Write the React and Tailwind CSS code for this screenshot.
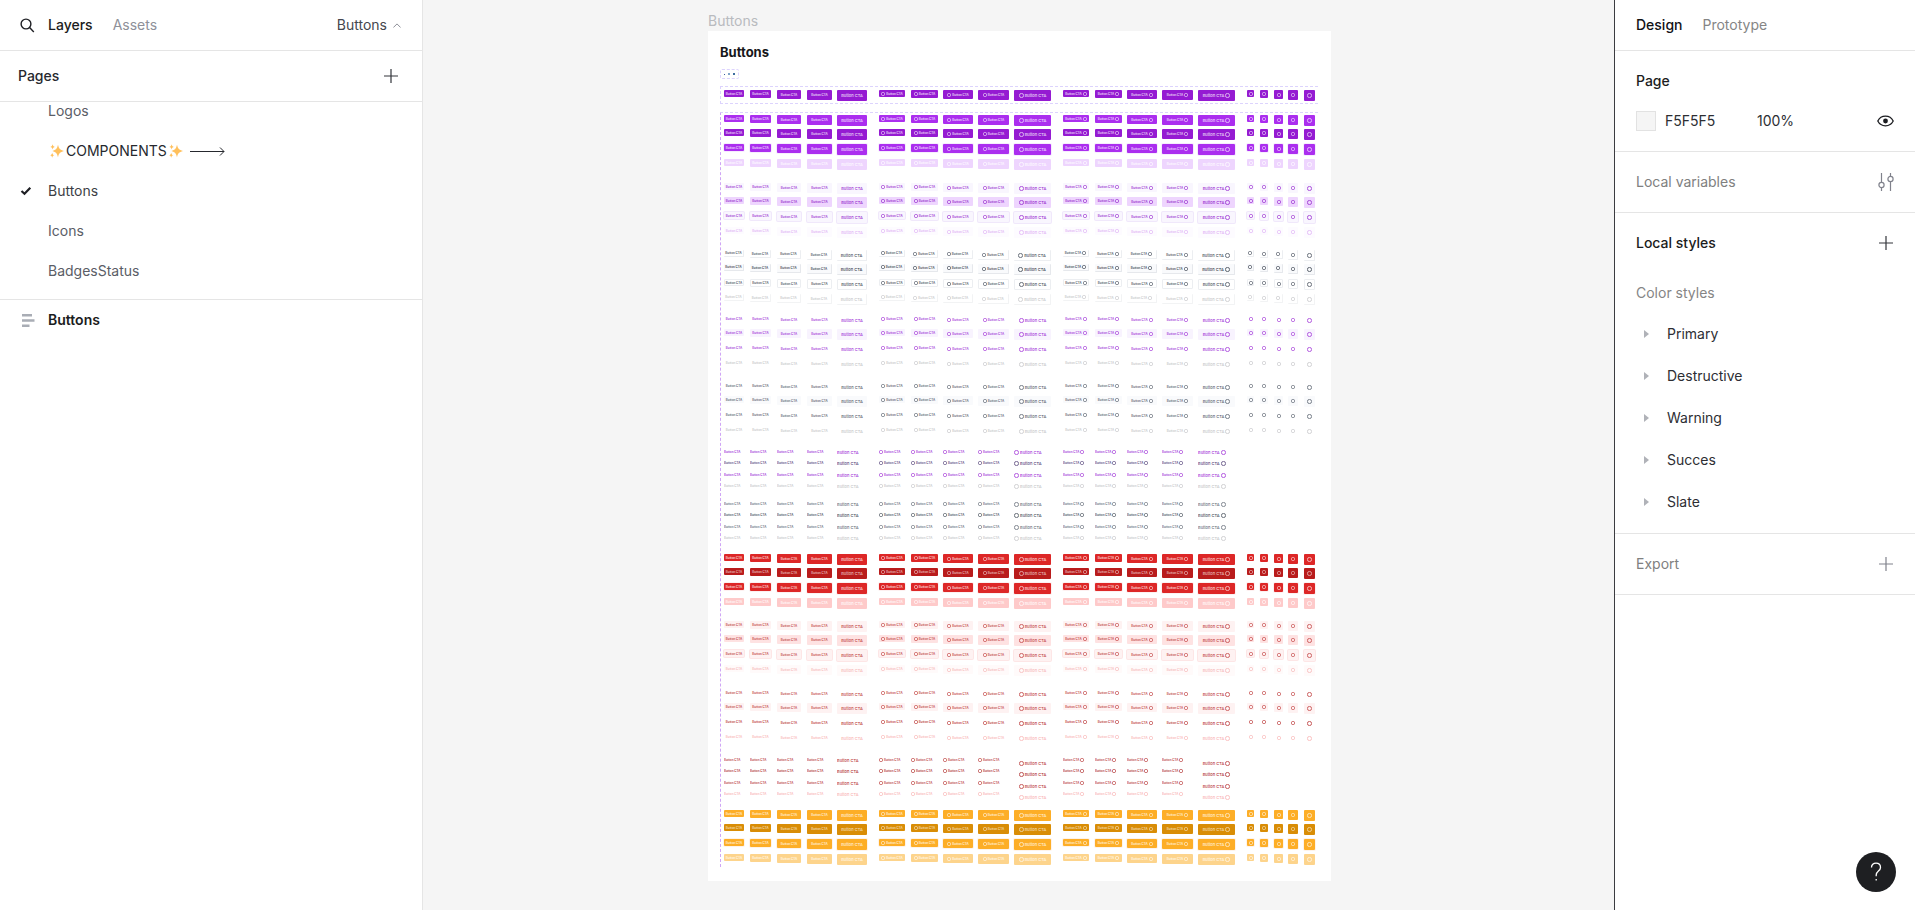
import React from "react";

const GRID =
  "grid grid-cols-[26px_27px_30px_30px_42px_32px_32px_35px_36px_49px_32px_32px_35px_36px_49px_13px_14px_14px_16px_11px] items-start";

const HEIGHTS = ["h-[7px]", "h-[8px]", "h-[9px]", "h-[10px]", "h-[11px]"];
const LABEL_WIDTHS = ["w-[20px]", "w-[21px]", "w-[24px]", "w-[25px]", "w-[30px]"];
const ICON_LABEL_WIDTHS = ["w-[26px]", "w-[27px]", "w-[30px]", "w-[31px]", "w-[37px]"];
const SQUARES = ["w-[7px]", "w-[8px]", "w-[9px]", "w-[10px]", "w-[11px]"];

const SECTIONS = [
  {
    name: "Primary",
    space: "pt-[2px]",
    rows: [
      "bg-[#ab2eef] text-white/80",
      "bg-[#951bd2] text-white/80",
      "bg-[#ab2eef] text-white/80 ring-1 ring-[#f6ecfe]",
      "bg-[#eed5fe] text-white/90",
    ],
  },
  {
    name: "Secondary",
    space: "pt-[13px]",
    rows: [
      "bg-[#f9f6fe] text-[#9a2ed2]",
      "bg-[#eed5fe] text-[#9428cc]",
      "bg-[#f9f6fe] text-[#9a2ed2] ring-1 ring-[#f0e8fb]",
      "bg-[#fdfbff] text-[#dfb2f5]",
    ],
  },
  {
    name: "Outline",
    space: "pt-[12px]",
    rows: [
      "border-r border-b border-[#eceef1] text-[#4b5360]",
      "border-r border-b border-[#e6e8ec] bg-[#f9fafc] text-[#3a424f]",
      "border border-[#eceef1] text-[#4b5360]",
      "border-r border-b border-[#f2f3f4] text-[#c6c7c9]",
    ],
  },
  {
    name: "Ghost",
    space: "pt-[10px]",
    rows: [
      "text-[#a236d8]",
      "bg-[#f8f3fe] text-[#a236d8]",
      "text-[#a236d8]",
      "text-[#c6c7c9]",
    ],
  },
  {
    name: "Ghost slate",
    space: "pt-[12px]",
    rows: [
      "text-[#5b6370]",
      "bg-[#f9fafc] text-[#5b6370]",
      "text-[#5b6370]",
      "text-[#c6c7c9]",
    ],
  },
  {
    name: "Link",
    space: "pt-[12px]",
    link: true,
    rows: ["text-[#a236d8]", "text-[#57457a]", "text-[#a236d8]", "text-[#c6c7c9]"],
  },
  {
    name: "Link slate",
    space: "pt-[12px]",
    link: true,
    rows: ["text-[#68707b]", "text-[#48505c]", "text-[#68707b]", "text-[#c6c7c9]"],
  },
  {
    name: "Destructive",
    space: "pt-[13px]",
    rows: [
      "bg-[#dd2727] text-white/80",
      "bg-[#b91c1c] text-white/70",
      "bg-[#dd2727] text-white/80 ring-1 ring-[#fdf0f0]",
      "bg-[#fecaca] text-white/90",
    ],
  },
  {
    name: "Destructive secondary",
    space: "pt-[12px]",
    rows: [
      "bg-[#fef2f2] text-[#c24444]",
      "bg-[#fee2e2] text-[#c24444]",
      "bg-[#fef2f2] text-[#c24444] ring-1 ring-[#fde6e6]",
      "bg-[#fffafa] text-[#f6b8b8]",
    ],
  },
  {
    name: "Destructive ghost",
    space: "pt-[13px]",
    rows: [
      "text-[#c03e3e]",
      "bg-[#fef2f2] text-[#c24444]",
      "text-[#ba3434]",
      "text-[#f9b4b4]",
    ],
  },
  {
    name: "Destructive link",
    space: "pt-[13px]",
    link: true,
    inset: true,
    rows: ["text-[#ba3a3a]", "text-[#b03030]", "text-[#ba3a3a]", "text-[#f9b4b4]"],
  },
  {
    name: "Warning",
    space: "pt-[13px]",
    rows: [
      "bg-[#fdae27] text-white/80",
      "bg-[#d98d06] text-white/70",
      "bg-[#fdae27] text-white/80 ring-1 ring-[#fef3ea]",
      "bg-[#fdd48c] text-white/80",
    ],
  },
];

function Dot({ size }) {
  return (
    <svg
      viewBox="0 0 10 10"
      className={size === 4 ? "size-[5px] shrink-0" : "size-[4px] shrink-0"}
      fill="none"
      stroke="currentColor"
      strokeWidth="1.6"
      aria-hidden="true"
    >
      <circle cx="5" cy="5" r="4.2" />
    </svg>
  );
}

function ButtonRow({ tone, link, inset }) {
  const cells = [];
  ["label", "left", "right", "icon"].forEach((kind) => {
    if (kind === "icon" && link) return;
    for (let s = 0; s < 5; s++) {
      const width =
        kind === "icon" ? SQUARES[s] : kind === "label" ? LABEL_WIDTHS[s] : ICON_LABEL_WIDTHS[s];
      const padded = inset && s === 4 && kind !== "label";
      const shape = link
        ? padded
          ? "h-[12px] justify-center"
          : "h-[6px] justify-start"
        : `${HEIGHTS[s]} justify-center`;
      cells.push(
        <button
          key={kind + s}
          type="button"
          aria-label="Button CTA"
          className={`flex items-center gap-px overflow-hidden rounded-[1px] font-semibold whitespace-nowrap ${shape} ${width} ${tone}`}
        >
          {(kind === "left" || kind === "icon") && <Dot size={s} />}
          {kind !== "icon" && (
            <span className={s === 4 ? "text-[4px] leading-[5px] font-medium" : "text-[3px] leading-[4px]"}>
              Button CTA
            </span>
          )}
          {kind === "right" && <Dot size={s} />}
        </button>
      );
    }
  });
  return <div className={GRID}>{cells}</div>;
}

function Section({ section }) {
  return (
    <section aria-label={section.name} className={section.space}>
      <div
        className={
          section.link
            ? "grid grid-rows-[11px_12px_11px_6px]"
            : "grid grid-rows-[14px_15px_15px_11px]"
        }
      >
        {section.rows.map((tone, i) => (
          <ButtonRow key={i} tone={tone} link={section.link} inset={section.inset} />
        ))}
      </div>
    </section>
  );
}

function Plus({ className }) {
  return (
    <svg viewBox="0 0 14 14" className={`size-[14px] ${className}`} stroke="currentColor" strokeWidth="1.2" aria-hidden="true">
      <path d="M7 0v14M0 7h14" />
    </svg>
  );
}

function Sparkle() {
  return (
    <svg viewBox="0 0 14 14" className="size-[14px]" fill="#ffc05c" aria-hidden="true">
      <path d="M8 .8c.9 3.800 1.900 5.200 6 6.200-4.100 1-5.100 2.600-6 6.200C7.100 9.600 6.200 8 2.400 7 6.200 6 7.100 4.600 8 .8z" />
      <path d="M2.600.3c.4 1.700.8 2.200 2.300 2.600-1.500.4-1.900.9-2.300 2.600C2.200 3.800 1.800 3.300.3 2.900 1.800 2.500 2.200 2 2.600.3zM2.200 8.700c.4 1.600.8 2.100 2.200 2.500-1.400.4-1.800.9-2.200 2.500-.4-1.600-.8-2.100-2.200-2.500 1.400-.4 1.800-.9 2.200-2.500z" />
    </svg>
  );
}

function PageItem({ selected, tone = "text-[#5a5d66]", children }) {
  return (
    <li>
      <button type="button" className={`flex h-10 w-full items-center pl-5 text-left ${tone}`}>
        <span className="flex w-7 shrink-0 items-center">
          {selected && (
            <svg viewBox="0 0 12 10" className="h-[10px] w-[12px]" fill="none" stroke="#1e1f24" strokeWidth="2.200" aria-hidden="true">
              <path d="M1.500 5l3 2.800L10.300 1.800" />
            </svg>
          )}
        </span>
        {children}
      </button>
    </li>
  );
}

function LeftPanel() {
  return (
    <aside className="flex w-[423px] shrink-0 flex-col border-r border-[#e5e5e5] bg-white">
      <div className="flex h-[51px] items-center border-b border-[#e5e5e5] pr-[21px] pl-5">
        <button type="button" aria-label="Search" className="w-7 text-[#1e1f24]">
          <svg viewBox="0 0 15 15" className="size-[15px]" fill="none" stroke="currentColor" strokeWidth="1.400" aria-hidden="true">
            <circle cx="6" cy="6" r="4.900" />
            <path d="M9.600 9.600l4.200 4.400" />
          </svg>
        </button>
        <button type="button" className="font-medium text-[#1b1c20]">Layers</button>
        <button type="button" className="ml-5 text-[#8e9099]">Assets</button>
        <button type="button" className="ml-auto flex items-center gap-[6px] text-[#45474e]">
          Buttons
          <svg viewBox="0 0 8 5" className="h-[5px] w-[8px]" fill="none" stroke="#8e9099" aria-hidden="true">
            <path d="M.4 4.500L4 .9l3.600 3.600" />
          </svg>
        </button>
      </div>
      <div className="flex h-[51px] items-center justify-between border-b border-[#e5e5e5] pr-6 pl-[18px]">
        <h2 className="font-medium text-[#26282e]">Pages</h2>
        <button type="button" aria-label="Add page"><Plus className="text-[#33353b]" /></button>
      </div>
      <div className="h-[198px] overflow-hidden border-b border-[#e5e5e5]">
        <ul className="-mt-[11px]">
          <PageItem>Logos</PageItem>
          <PageItem tone="text-[#26282e]">
            <span className="flex items-center gap-[2px] pl-[2px]">
              <Sparkle />
              <span>COMPONENTS</span>
              <Sparkle />
              <svg viewBox="0 0 35 10" className="ml-[5px] h-[10px] w-[35px]" fill="none" stroke="currentColor" aria-hidden="true">
                <path d="M0 5.500h34M30 1.500l4 4-4 4" />
              </svg>
            </span>
          </PageItem>
          <PageItem selected tone="text-[#3d3f46]">Buttons</PageItem>
          <PageItem>Icons</PageItem>
          <PageItem>BadgesStatus</PageItem>
        </ul>
      </div>
      <button type="button" className="flex h-10 items-center pl-[21px] text-left font-semibold text-[#1b1c20]">
        <svg viewBox="0 0 14 13" className="mr-[13px] h-[13px] w-[14px]" fill="#a9adb5" aria-hidden="true">
          <path d="M1 0h10v2.500H1zM1 5.200h12.500v2.500H1zM1 10.400h7.500v2.500H1z" />
        </svg>
        Buttons
      </button>
    </aside>
  );
}

function RightPanel() {
  return (
    <aside className="w-[301px] shrink-0 border-l border-[#3b3c40] bg-white">
      <div className="flex h-[51px] items-center gap-5 border-b border-[#e5e5e5] px-[21px]">
        <button type="button" className="font-medium text-[#111216]">Design</button>
        <button type="button" className="text-[#858585]">Prototype</button>
      </div>
      <section className="border-b border-[#e5e5e5] px-[21px] py-[10px]">
        <h2 className="flex h-10 items-center font-medium text-[#1b1c20]">Page</h2>
        <div className="flex h-10 items-center text-[#2d2e33]">
          <button type="button" aria-label="Page color" className="size-5 border border-[#e2e2e2] bg-[#f5f5f5]" />
          <input aria-label="Color value" defaultValue="F5F5F5" className="ml-[9px] w-[92px] bg-transparent outline-none" />
          <input aria-label="Opacity" defaultValue="100%" className="w-12 bg-transparent outline-none" />
          <button type="button" aria-label="Toggle visibility" className="ml-auto">
            <svg viewBox="0 0 17 12" className="h-[12px] w-[17px]" fill="none" stroke="#1b1c20" strokeWidth="1.300" aria-hidden="true">
              <path d="M.8 6C2.300 3 5 1.200 8.500 1.200S14.700 3 16.200 6c-1.500 3-4.200 4.800-7.700 4.800S2.300 9 .8 6z" />
              <circle cx="8.500" cy="6" r="2.400" fill="#1b1c20" stroke="none" />
            </svg>
          </button>
        </div>
      </section>
      <section className="flex h-[61px] items-center justify-between border-b border-[#e5e5e5] px-[21px] text-[#808080]">
        <h2>Local variables</h2>
        <button type="button" aria-label="Open variables">
          <svg viewBox="0 0 16 18" className="h-[18px] w-[16px]" fill="none" stroke="#80828c" strokeWidth="1.200" aria-hidden="true">
            <path d="M3.500 0v9M3.500 15v3M12.500 0v3M12.500 9v9" />
            <circle cx="3.500" cy="12" r="2.600" />
            <circle cx="12.500" cy="6" r="2.600" />
          </svg>
        </button>
      </section>
      <section className="border-b border-[#e5e5e5] pb-[10px]">
        <div className="flex h-[60px] items-center justify-between pr-[22px] pl-[21px]">
          <h2 className="font-medium text-[#1b1c20]">Local styles</h2>
          <button type="button" aria-label="Add style"><Plus className="text-[#33353b]" /></button>
        </div>
        <h3 className="flex h-10 items-center px-[21px] text-[#858585]">Color styles</h3>
        <ul>
          {["Primary", "Destructive", "Warning", "Succes", "Slate"].map((name) => (
            <li key={name}>
              <button type="button" className="flex h-[42px] w-full items-center gap-[18px] pl-[29px] text-left text-[#2d2e33]">
                <svg viewBox="0 0 5 8" className="h-[8px] w-[5px]" fill="#b0b2b8" aria-hidden="true">
                  <path d="M0 0l5 4-5 4z" />
                </svg>
                {name}
              </button>
            </li>
          ))}
        </ul>
      </section>
      <section className="flex h-[61px] items-center justify-between border-b border-[#e5e5e5] pr-[22px] pl-[21px] text-[#808080]">
        <h2>Export</h2>
        <button type="button" aria-label="Add export"><Plus className="text-[#80828c]" /></button>
      </section>
    </aside>
  );
}

function Canvas() {
  return (
    <main className="flex flex-1 flex-col items-center overflow-hidden bg-[#f5f5f5] pt-[11px] pl-[2px]">
      <div className="w-[623px]">
        <p className="h-5 leading-5 text-[#b9bbbf]">Buttons</p>
        <div className="bg-white pt-[13px] pr-[13px] pb-[14px] pl-3">
          <h1 className="h-4 text-[13px] leading-4 font-bold text-[#17181b]">Buttons</h1>
          <div className="mt-[9px] flex h-[10px] w-[19px] items-center justify-center gap-[3px] rounded-[2px] border border-dashed border-[#dcd3fd]">
            <span className="size-[1px] bg-[#3b5d9e]" />
            <span className="size-[2px] bg-[#7fa3c9]" />
            <span className="size-[2px] bg-[#3b6d9e]" />
          </div>
          <div className="mt-[7px] h-[18px] border-y border-l border-dashed border-[#dcd3fd] pt-[3px] pl-[3px]">
            <ButtonRow tone="bg-[#951bd2] text-white/80" />
          </div>
          <div className="mt-2 border-t border-l border-dashed border-t-[#dcd3fd] border-l-[#cfa6f5] pb-[2px] pl-[3px]">
            {SECTIONS.map((section) => (
              <Section key={section.name} section={section} />
            ))}
          </div>
        </div>
      </div>
    </main>
  );
}

export default function App() {
  return (
    <div className="flex min-h-screen bg-white font-['Inter',sans-serif] text-[14px] leading-5">
      <LeftPanel />
      <Canvas />
      <RightPanel />
      <button
        type="button"
        aria-label="Help"
        className="fixed right-[19px] bottom-[18px] flex size-10 items-center justify-center rounded-full bg-[#1e1f22] text-white"
      >
        <svg viewBox="0 0 12 20" className="h-[20px] w-[12px]" fill="none" stroke="currentColor" strokeWidth="1.300" aria-hidden="true">
          <path d="M1.500 5.500C1.500 2.800 3.400 1.200 6 1.200s4.500 1.700 4.500 4.200c0 3.600-4.300 3.700-4.300 7.600v1.200" />
          <path d="M6.200 17v1.600" />
        </svg>
      </button>
    </div>
  );
}
